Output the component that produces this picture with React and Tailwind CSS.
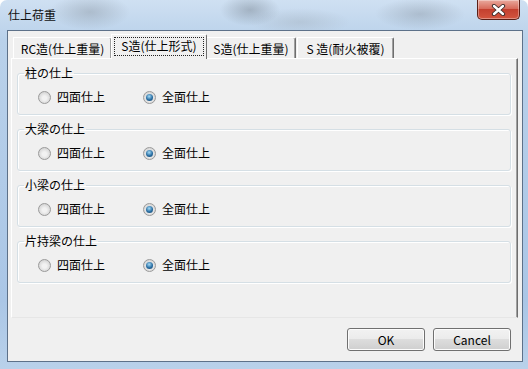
import React from 'react';

const FONT = "font-['Meiryo_UI','Noto_Sans_CJK_JP',sans-serif]";

const GROUPS = ['柱の仕上', '大梁の仕上', '小梁の仕上', '片持梁の仕上'];

function Radio({ checked, label, className = '' }) {
  return (
    <div className={`flex items-center ${className}`}>
      <span className="w-[13px] h-[13px] rounded-full border border-[#9a9a9a] bg-[radial-gradient(circle_at_50%_55%,#f2f2f2_25%,#c6c6c6)] flex items-center justify-center shrink-0">
        {checked && (
          <span className="w-[7px] h-[7px] rounded-full bg-[radial-gradient(circle_at_45%_35%,#a6dcf8,#2a6fa3_55%,#103c63)]" />
        )}
      </span>
      <span className="ml-[6px] leading-[16px]">{label}</span>
    </div>
  );
}

function Group({ title }) {
  return (
    <fieldset className="h-[50px] mx-[5px] mr-[6px] px-[6px] border border-[#d5dfe5] rounded-[3px] shadow-[inset_1px_1px_0_#fff,1px_1px_0_#fff]">
      <legend className="px-[1px] leading-[16px]">{title}</legend>
      <div className="flex items-center mt-[8px] h-[16px]">
        <Radio label="四面仕上" className="ml-[14px] w-[105px]" />
        <Radio label="全面仕上" checked />
      </div>
    </fieldset>
  );
}

function Tab({ label, selected, className = '' }) {
  if (selected) {
    return (
      <div className={`relative -mb-px h-[25px] border border-b-0 border-t-white border-l-white border-r-[#6e6e6e] rounded-tr-[2px] bg-[#f0f0f0] z-10 p-[2px] pb-[3px] ${className}`}>
        <div className="h-full border border-dotted border-[#222] flex items-center justify-center pb-[1px]">{label}</div>
      </div>
    );
  }
  return (
    <div className={`h-[21px] border border-b-0 border-t-white border-l-white border-r-[#6e6e6e] rounded-tr-[2px] bg-[#f0f0f0] shadow-[inset_-1px_0_0_#a0a0a0] flex items-center justify-center pt-[1px] ${className}`}>
      {label}
    </div>
  );
}

function WinButton({ children }) {
  return (
    <div className="w-[78px] h-[23px] rounded-[3px] border border-[#707070] bg-[linear-gradient(#f2f2f2,#ebebeb_50%,#dddddd_50%,#cfcfcf)] shadow-[inset_0_0_0_1px_#fcfcfc] flex items-center justify-center">
      {children}
    </div>
  );
}

function CloseButton() {
  return (
    <div className="w-[43px] h-[20px] rounded-b-[5px] border border-t-0 border-[#5a1f17] bg-[linear-gradient(#e9a99d,#d86c5c_45%,#c4402f_50%,#d3553f)] shadow-[inset_0_0_0_1px_rgba(255,255,255,0.35)] flex items-center justify-center">
      <svg width="15" height="12" viewBox="0 0 15 12">
        <path d="M3 2 L12 10 M12 2 L3 10" stroke="#3a2a28" strokeWidth="4.2" strokeLinecap="round" />
        <path d="M3 2 L12 10 M12 2 L3 10" stroke="#ffffff" strokeWidth="2.4" strokeLinecap="round" />
      </svg>
    </div>
  );
}

export default function App() {
  return (
    <div className={`w-[528px] h-[369px] flex flex-col overflow-hidden rounded-t-[7px] text-[12px] text-black ${FONT} bg-[radial-gradient(ellipse_40px_18px_at_90px_12px,rgba(120,130,140,0.35),transparent),radial-gradient(ellipse_30px_16px_at_250px_10px,rgba(90,100,110,0.35),transparent),radial-gradient(ellipse_50px_14px_at_300px_22px,rgba(150,160,170,0.3),transparent),radial-gradient(ellipse_45px_16px_at_420px_14px,rgba(110,120,130,0.3),transparent),linear-gradient(#cfe0f2,#b9d1ea_40px,#aac6e6_300px,#b9d1ea)]`}>
      <div className="h-[30px] flex justify-between items-start shrink-0">
        <div className="pl-[8px] pt-[7px] leading-[16px] text-[#111]">仕上荷重</div>
        <div className="mr-[8px]">
          <CloseButton />
        </div>
      </div>
      <div className="ml-[7px] mr-[5px] h-[332px] border border-[#5d7189] bg-[#f0f0f0] flex flex-col shrink-0">
        <div className="h-[27px] flex items-end pl-[5px] shrink-0">
          <Tab label="RC造(仕上重量)" className="w-[99px]" />
          <Tab label="S造(仕上形式)" selected className="w-[96px] -ml-px" />
          <Tab label="S造(仕上重量)" className="w-[90px] -ml-px" />
          <Tab label="S 造(耐火被覆)" className="w-[97px] ml-px" />
        </div>
        <div className="ml-[3px] mr-[4px] h-[260px] border border-t-white border-l-white border-r-[#6e6e6e] border-b-[#e6e6e6] shadow-[inset_-1px_0_0_#a0a0a0] bg-[#f0f0f0] flex flex-col gap-[6px] pt-[6px] shrink-0">
          {GROUPS.map((g) => (
            <Group key={g} title={g} />
          ))}
        </div>
        <div className="flex justify-end gap-[8px] mt-[10px] mr-[11px]">
          <WinButton>OK</WinButton>
          <WinButton>Cancel</WinButton>
        </div>
      </div>
    </div>
  );
}
